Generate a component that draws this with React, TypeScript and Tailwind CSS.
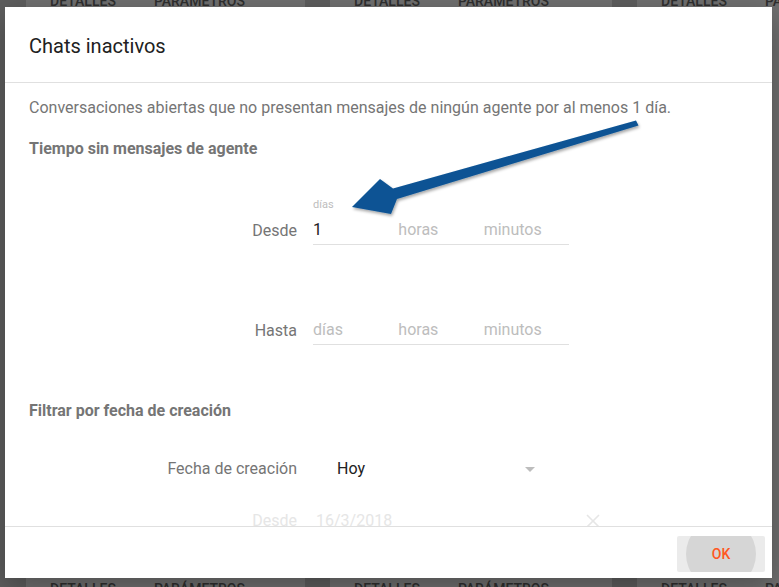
import React from "react";

function CardText({ className }: { className: string }) {
  return (
    <div className={`flex gap-[38px] pl-[24px] text-[14px] leading-[16px] font-medium text-[#2f2f2f] ${className}`}>
      <span>DETALLES</span>
      <span>PARÁMETROS</span>
    </div>
  );
}

function Backdrop() {
  return (
    <div className="flex h-full gap-[25px] pl-[26px] bg-[#5e5e5e]">
      <div className="w-[279px] shrink-0 h-full bg-[#707070] flex flex-col justify-between">
        <CardText className="-mt-[7px]" />
        <CardText className="-mb-[10px]" />
      </div>
      <div className="w-[282px] shrink-0 h-full bg-[#707070] flex flex-col justify-between">
        <CardText className="-mt-[7px]" />
        <CardText className="-mb-[10px]" />
      </div>
      <div className="flex-1 h-full bg-[#707070] flex flex-col">
        <CardText className="-mt-[7px]" />
        <div className="flex flex-col items-end">
          <div className="mt-[117px] w-[10px] h-[3px] bg-black" />
          <div className="mt-[62px] w-[10px] h-[8px] bg-black" />
          <div className="mt-[200px] w-[10px] h-[4px] bg-black" />
          <div className="mt-[45px] w-[10px] h-[4px] bg-black" />
          <div className="mt-[54px] w-[10px] h-[4px] bg-black" />
        </div>
        <div className="flex-1" />
        <CardText className="-mb-[10px]" />
      </div>
    </div>
  );
}

function TimeRow({ label, first, floating }: { label: string; first?: string; floating?: boolean }) {
  return (
    <div className="flex items-end gap-4">
      <div className="w-[268px] text-right text-[16px] text-[#757575] leading-[24px] pb-[2px]">{label}</div>
      <div className="w-[256px] flex items-end border-b border-[#e0e0e0]">
        {["días", "horas", "minutos"].map((p, i) => (
          <div key={p} className="w-[86px] flex flex-col">
            {i === 0 && floating ? (
              <>
                <span className="text-[11px] leading-[14px] text-[#bdbdbd] mb-[6px]">{p}</span>
                <span className="text-[16px] leading-[24px] text-[#212121] pb-[2px]">{first}</span>
              </>
            ) : (
              <span className="text-[16px] leading-[24px] text-[#bdbdbd] pb-[2px]">{p}</span>
            )}
          </div>
        ))}
      </div>
    </div>
  );
}

export default function App() {
  return (
    <div className="relative w-[779px] h-[587px] overflow-hidden font-['Roboto',sans-serif]">
      <Backdrop />
      <div className="absolute left-[5px] top-[7px] w-[767px] h-[571px] bg-white flex flex-col shadow-[0_10px_30px_rgba(0,0,0,0.3)]">
        <div className="h-[76px] shrink-0 px-6 flex items-center border-b border-[#e0e0e0]">
          <h1 className="text-[20px] text-[#212121] pt-[3px]">Chats inactivos</h1>
        </div>
        <div className="flex-1 overflow-hidden px-6 pt-[13px]">
          <p className="text-[16px] leading-[24px] text-[#757575]">
            Conversaciones abiertas que no presentan mensajes de ningún agente por al menos 1 día.
          </p>
          <h2 className="mt-[17px] text-[16px] leading-[24px] font-bold text-[#757575]">
            Tiempo sin mensajes de agente
          </h2>
          <div className="mt-[37px]">
            <TimeRow label="Desde" first="1" floating />
          </div>
          <div className="mt-[73px]">
            <TimeRow label="Hasta" />
          </div>
          <h2 className="mt-[54px] text-[16px] leading-[24px] font-bold text-[#757575]">
            Filtrar por fecha de creación
          </h2>
          <div className="mt-[34px] flex items-center gap-4">
            <div className="w-[268px] text-right text-[16px] leading-[24px] text-[#757575]">Fecha de creación</div>
            <div className="w-[222px] flex items-center justify-between pl-[24px]">
              <span className="text-[16px] leading-[24px] text-[#212121]">Hoy</span>
              <svg width="10" height="5" viewBox="0 0 10 5">
                <path d="M0 0 L10 0 L5 5 Z" fill="#bdbdbd" />
              </svg>
            </div>
          </div>
          <div className="mt-[28px] flex items-center gap-4">
            <div className="w-[268px] text-right text-[16px] leading-[24px] text-[#e6e6e6]">Desde</div>
            <div className="w-[287px] flex items-center justify-between pl-[3px]">
              <span className="text-[16px] leading-[24px] text-[#e6e6e6]">16/3/2018</span>
              <svg width="14" height="14" viewBox="0 0 14 14">
                <path d="M1 1 L13 13 M13 1 L1 13" stroke="#e6e6e6" strokeWidth="1.6" />
              </svg>
            </div>
          </div>
        </div>
        <div className="h-[52px] shrink-0 border-t border-[#e0e0e0] flex items-start justify-end pr-[7px] pt-[9px]">
          <button className="relative w-[88px] h-[36px] rounded-[2px] bg-[#ebebeb] overflow-hidden flex items-center justify-center">
            <span className="absolute left-[9px] top-[-17px] w-[70px] h-[70px] rounded-full bg-[#d6d6d6]" />
            <span className="relative text-[14px] font-medium text-[#ff5722]">OK</span>
          </button>
        </div>
      </div>
      <svg className="absolute left-0 top-0" width="779" height="587" style={{ pointerEvents: "none" }}>
        <defs>
          <filter id="sh" x="-10%" y="-10%" width="120%" height="130%">
            <feDropShadow dx="1" dy="2" stdDeviation="1.5" floodColor="#000" floodOpacity="0.35" />
          </filter>
        </defs>
        <polygon
          points="636,120.5 393,188.5 380,179 352,207 391,214 397,199 638.5,125.5"
          fill="#0b5394"
          filter="url(#sh)"
        />
      </svg>
    </div>
  );
}
